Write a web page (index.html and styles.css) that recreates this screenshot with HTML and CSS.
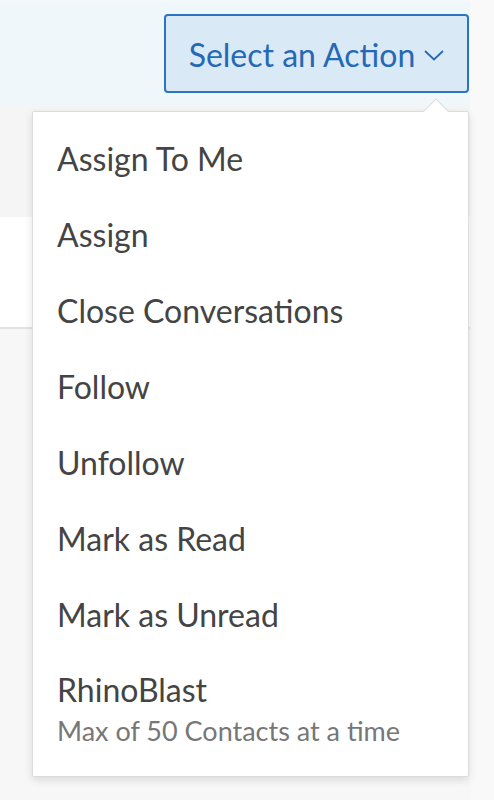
FILE: index.html
```html
<!DOCTYPE html>
<html>
<head>
<meta charset="utf-8">
<link rel="stylesheet" href="styles.css">
</head>
<body>
<div class="page">
  <main class="main">
    <header class="header">
      <button class="action-btn">
        <span>Select an Action</span>
        <svg class="chev" width="20" height="11" viewBox="0 0 20 11"><path d="M1 1 L10 9.5 L19 1" fill="none" stroke="#2668b5" stroke-width="1.8"/></svg>
      </button>
    </header>
    <section class="band-gray"></section>
    <section class="band-white"></section>
    <section class="rest"></section>

    <div class="dropdown">
      <div class="caret"></div>
      <ul class="menu">
        <li class="item">Assign To Me</li>
        <li class="item">Assign</li>
        <li class="item">Close Conversations</li>
        <li class="item">Follow</li>
        <li class="item">Unfollow</li>
        <li class="item">Mark as Read</li>
        <li class="item">Mark as Unread</li>
        <li class="item item-multi">
          <span class="title">RhinoBlast</span>
          <span class="sub">Max of 50 Contacts at a time</span>
        </li>
      </ul>
    </div>
  </main>
  <aside class="side"></aside>
</div>
</body>
</html>
```

FILE: styles.css
```css
* { box-sizing: border-box; }
html, body { margin: 0; padding: 0; height: 100%; }
body {
  font-family: Lato, "Open Sans", sans-serif;
  background: #f9f9f9;
}
.page {
  display: flex;
  height: 800px;
}
.main {
  width: 470px;
  position: relative;
  display: flex;
  flex-direction: column;
  border-top: 2px solid #f5f8fa;
}
.side {
  flex: 1;
  background: #f9f9f9;
}
.header {
  height: 103px;
  background: #eff7fb;
  display: flex;
  justify-content: flex-end;
  align-items: flex-start;
  padding: 12px 1px 0 0;
}
.action-btn {
  width: 305px;
  height: 79px;
  border: 2px solid #2a73c5;
  border-radius: 4px;
  background: #d9eaf6;
  color: #2668b5;
  font-family: Lato, sans-serif;
  font-size: 32px;
  display: flex;
  align-items: center;
  justify-content: center;
  gap: 9px;
  padding: 1px 0 0 0;
}
.chev { margin-top: 2px; }
.band-gray {
  height: 112px;
  background: #f5f5f5;
}
.band-white {
  height: 112px;
  background: #ffffff;
  border-bottom: 2px solid #e2e2e2;
}
.rest {
  flex: 1;
  background: #f7f7f7;
}
.dropdown {
  position: absolute;
  left: 32px;
  top: 109px;
  width: 437px;
  height: 666px;
  background: #fff;
  border: 1px solid #dcdcdc;
  border-radius: 2px;
  box-shadow: 0 3px 8px rgba(0,0,0,0.12);
}
.caret {
  position: absolute;
  right: 23px;
  top: -10px;
  width: 18px;
  height: 18px;
  background: #fff;
  border-top: 1px solid #dcdcdc;
  border-left: 1px solid #dcdcdc;
  transform: rotate(45deg);
}
.menu {
  list-style: none;
  margin: 0;
  padding: 8px 0 0 0;
}
.item {
  height: 76px;
  display: flex;
  align-items: center;
  padding: 0 24px;
  font-size: 32px;
  color: #444;
}
.item-multi {
  height: auto;
  flex-direction: column;
  align-items: flex-start;
  padding-top: 18px;
}
.title { line-height: 40px; }
.sub {
  font-size: 27px;
  color: #777;
  line-height: 36px;
  margin-top: 3px;
}
```
